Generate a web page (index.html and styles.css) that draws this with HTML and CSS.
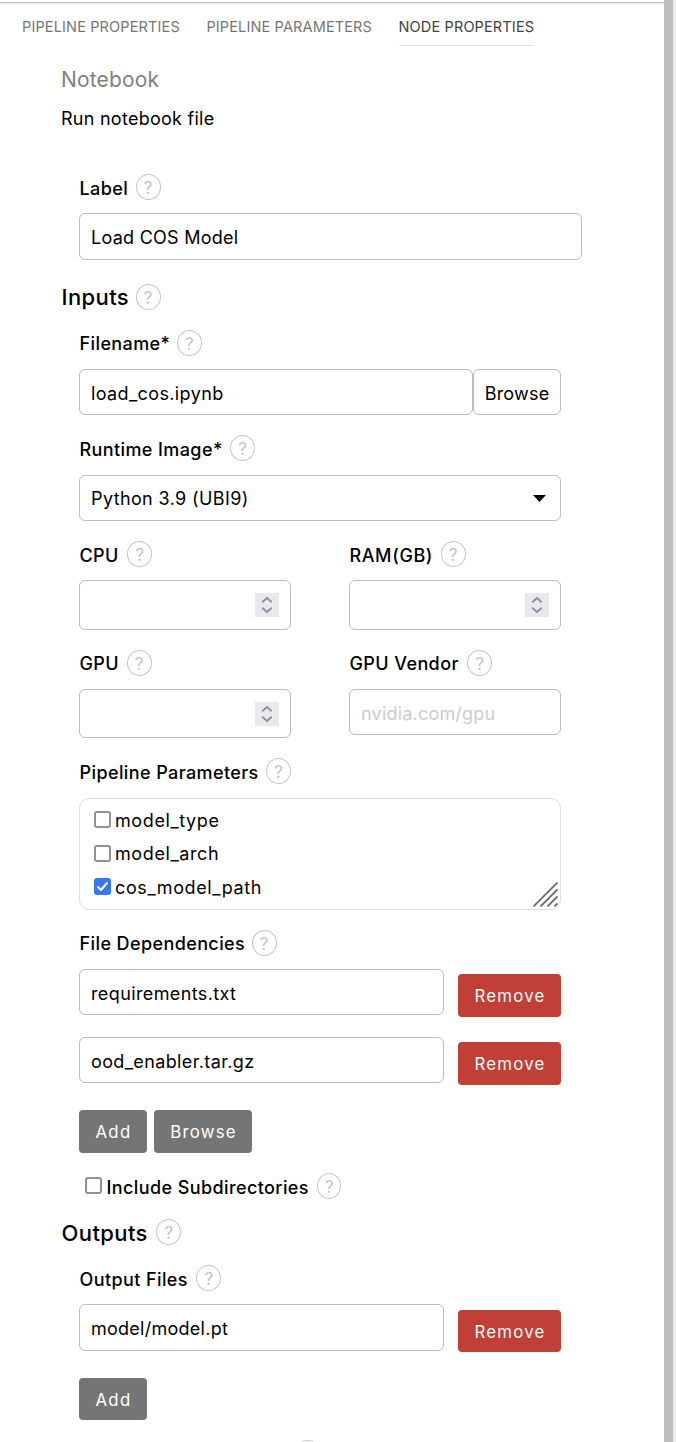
FILE: index.html
```html
<!DOCTYPE html>
<html lang="en">
<head>
<meta charset="utf-8">
<title>Node Properties</title>
<link rel="stylesheet" href="styles.css">
</head>
<body>
<svg width="0" height="0" class="defs">
  <symbol id="spin" viewBox="0 0 24 24"><path d="M7.8 8.700 12 5l4.200 3.700M7.800 15.300 12 19l4.200-3.700" fill="none" stroke="#8f8f9d" stroke-width="1.900" stroke-linecap="round" stroke-linejoin="round"/></symbol>
</svg>
<div class="panel">
  <nav class="tabs">
    <a class="tab">PIPELINE PROPERTIES</a>
    <a class="tab">PIPELINE PARAMETERS</a>
    <a class="tab active">NODE PROPERTIES</a>
  </nav>
  <main class="content">
    <h1 class="title">Notebook</h1>
    <p class="desc">Run notebook file</p>

    <section class="fields">
      <div class="head low"><span>Label</span><i class="help">?</i></div>
      <div class="input full"><span>Load COS Model</span></div>
    </section>

    <div class="head section inputs"><span>Inputs</span><i class="help">?</i></div>
    <section class="fields">
      <div class="head filename"><span>Filename*</span><i class="help">?</i></div>
      <div class="file-row">
        <div class="input wider"><span>load_cos.ipynb</span></div>
        <button class="input browse">Browse</button>
      </div>

      <div class="head runtime low"><span>Runtime Image*</span><i class="help">?</i></div>
      <div class="input select wider"><span>Python 3.9 (UBI9)</span><svg width="13" height="7" viewBox="0 0 13 7"><path d="M0 0h13L6.500 7z"/></svg></div>

      <div class="pair first">
        <div>
          <div class="head low short"><span>CPU</span><i class="help">?</i></div>
          <div class="input number"><svg class="spin"><use href="#spin"/></svg></div>
        </div>
        <div>
          <div class="head low"><span class="ram">RAM(GB)</span><i class="help">?</i></div>
          <div class="input number"><svg class="spin"><use href="#spin"/></svg></div>
        </div>
      </div>
      <div class="pair second">
        <div>
          <div class="head"><span>GPU</span><i class="help">?</i></div>
          <div class="input number"><svg class="spin"><use href="#spin"/></svg></div>
        </div>
        <div>
          <div class="head short"><span>GPU Vendor</span><i class="help">?</i></div>
          <div class="input placeholder"><span>nvidia.com/gpu</span></div>
        </div>
      </div>

      <div class="head params low"><span>Pipeline Parameters</span><i class="help">?</i></div>
      <div class="list">
        <label class="option"><i class="check"></i><span>model_type</span></label>
        <label class="option"><i class="check"></i><span>model_arch</span></label>
        <label class="option"><i class="check on"><svg width="17" height="17" viewBox="0 0 17 17"><path d="M4 9l3 3 6-7" fill="none" stroke="#fff" stroke-width="2" stroke-linecap="round" stroke-linejoin="round"/></svg></i><span>cos_model_path</span></label>
        <svg class="grip" width="25" height="25" viewBox="0 0 25 25"><path d="M.5 24.500 24.500.5M7.500 24.500l17-17M14.500 24.500l10-10M21.500 24.500l3-3" stroke="#6c6c6c" stroke-width="1.800"/></svg>
      </div>

      <div class="head deps"><span>File Dependencies</span><i class="help">?</i></div>
      <div class="item"><div class="input wider"><span>requirements.txt</span></div><button class="btn remove">Remove</button></div>
      <div class="item next"><div class="input wider"><span>ood_enabler.tar.gz</span></div><button class="btn remove">Remove</button></div>
      <div class="actions"><button class="btn">Add</button><button class="btn">Browse</button></div>
      <div class="head include low short"><i class="check"></i><span>Include Subdirectories</span><i class="help">?</i></div>
    </section>

    <div class="head section outputs short"><span>Outputs</span><i class="help">?</i></div>
    <section class="fields">
      <div class="head files low short"><span>Output Files</span><i class="help">?</i></div>
      <div class="item out"><div class="input"><span>model/model.pt</span></div><button class="btn remove">Remove</button></div>
      <div class="actions last"><button class="btn">Add</button></div>
      <div class="head more"><i class="help"></i></div>
    </section>
  </main>
</div>
</body>
</html>
```
FILE: styles.css
```css
* { box-sizing: border-box; }
body {
  margin: 0;
  height: 1442px;
  overflow: hidden;
  background: #ececec;
  font: 18px/24px Inter, "Liberation Sans", sans-serif;
  letter-spacing: 0.260px;
  color: #000;
}
.defs { position: absolute; }
.panel {
  width: 673px;
  height: 1442px;
  overflow: hidden;
  border-right: 9px solid #bdbdbd;
  background: linear-gradient(#fff 0 2px, #bdbdbd 2px 3px, #f1f1f1 3px 4px, #fff 4px);
}
.tabs {
  display: flex;
  gap: 26.500px;
  height: 46px;
  padding: 9px 0 0 22px;
}
.tab {
  height: 37px;
  font-size: 14.500px;
  line-height: 36px;
  letter-spacing: 0.140px;
  color: #757575;
  white-space: nowrap;
}
.tab.active { color: #424242; border-bottom: 1px solid #e0e0e0; }
.content { padding-left: 61px; }
.title {
  margin: 20px 0 0;
  font-size: 21px;
  line-height: 28px;
  font-weight: 400;
  letter-spacing: 0.150px;
  color: #808080;
}
.desc { margin: 13px 0 43px; line-height: 24px; }
.fields { width: 482px; margin-left: 18px; }
.head {
  display: flex;
  align-items: center;
  height: 26px;
  font-weight: 500;
  letter-spacing: 0.400px;
  white-space: nowrap;
}
.head span { position: relative; top: 1px; left: 0.500px; }
.head.low span { top: 2px; }
.head.inputs span { top: 0; }
.head .ram { letter-spacing: 0.600px; }
.help {
  flex: none;
  width: 25px;
  height: 26px;
  margin-left: 8px;
  border: 1px solid #c6c6c6;
  border-radius: 50%;
  font-size: 17px;
  font-style: normal;
  font-weight: 400;
  line-height: 27px;
  letter-spacing: 0;
  text-align: center;
  color: #c2c2c2;
}
.short .help { margin-left: 9px; }
.inputs .help, .filename .help, .deps .help { margin-left: 7px; }
.input {
  display: flex;
  align-items: center;
  height: 46px;
  padding: 3px 11px 0;
  border: 1px solid #bdbdbd;
  border-radius: 6px;
  background: #fff;
  white-space: nowrap;
}
.wider { letter-spacing: 0.380px; }
.full { width: 503px; height: 47px; margin-top: 13px; padding-top: 2px; }
.section { margin-top: 24px; font-size: 22px; }
.filename { margin-top: 20px; }
.file-row { display: grid; grid-template-columns: 394px 88px; margin-top: 13px; }
.browse {
  justify-content: center;
  font: inherit;
  letter-spacing: 0.200px;
  color: #000;
}
.runtime { margin-top: 20px; }
.select { margin-top: 14px; padding: 0 14px 0 11px; justify-content: space-between; }
.select span { padding-top: 2px; }
.pair { display: grid; grid-template-columns: 212px 212px; column-gap: 58px; align-items: start; }
.first { margin-top: 20px; }
.second { margin-top: 20px; }
.pair .input { margin-top: 13px; }
.number { height: 50px; padding: 0 11px; justify-content: flex-end; }
.second .number { height: 49px; }
.spin { width: 24px; height: 24px; background: #e9e9ed; }
.placeholder { letter-spacing: 0.200px; color: #ccc; }
.params { margin-top: 20px; }
.list {
  position: relative;
  height: 112px;
  margin-top: 14px;
  padding: 5px 14px;
  border: 1px solid #e0e0e0;
  border-radius: 10px;
  letter-spacing: 0.600px;
}
.option { display: flex; align-items: center; gap: 4px; height: 33.500px; }
.check {
  flex: none;
  width: 17px;
  height: 17px;
  margin-bottom: 2px;
  border: 2px solid #8f8f9d;
  border-radius: 3px;
  background: #fff;
}
.check.on { border: 0; background: #3478f6; }
.check svg { display: block; }
.grip { position: absolute; right: 2px; bottom: 2px; }
.deps { margin-top: 20px; }
.item { display: grid; grid-template-columns: 365px 103px; column-gap: 14px; margin-top: 13px; }
.item.next { margin-top: 20px; }
.btn {
  height: 43px;
  padding: 1px 0 0 1px;
  border: 0;
  border-radius: 4px;
  background: #757575;
  font: 400 16.800px/24px Inter, "Liberation Sans", sans-serif;
  letter-spacing: 1.250px;
  text-align: center;
  color: #fff;
}
.remove { margin-top: 5px; background: #c23f38; }
.actions { display: grid; grid-template-columns: 68px 98px; column-gap: 7px; margin-top: 25px; }
.include { margin: 20px 0 0 6px; }
.include span { margin-left: 4px; }
.include .help { width: 24px; }
.outputs { margin-top: 20px; }
.files { margin-top: 20px; }
.out .input { height: 47px; padding-top: 2px; }
.out .remove { height: 42px; margin-top: 6px; }
.last { margin-top: 26px; }
.last .btn { height: 42px; }
.more { margin-top: 20px; padding-left: 208px; }
```
